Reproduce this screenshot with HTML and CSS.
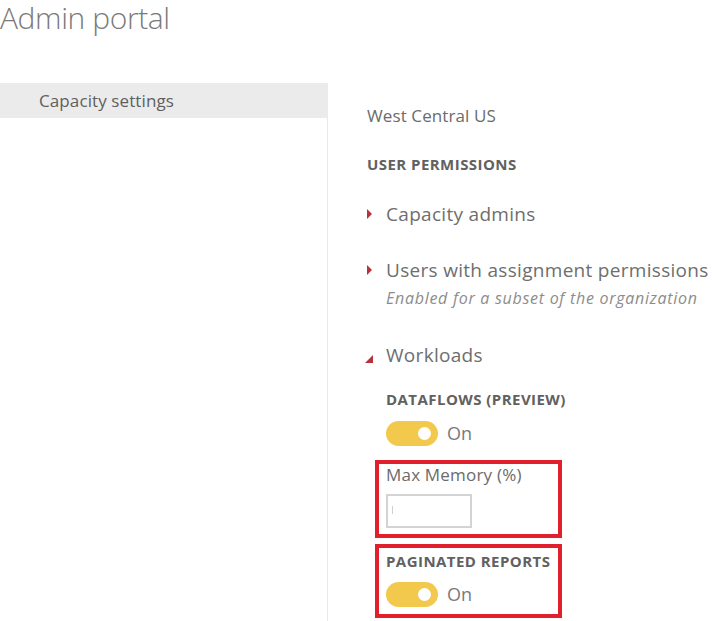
FILE: index.html
```html
<!DOCTYPE html>
<html>
<head>
<meta charset="utf-8">
<link rel="stylesheet" href="styles.css">
</head>
<body>
<h1 class="title">Admin portal</h1>
<div class="layout">
  <nav class="sidebar">
    <div class="nav-item">Capacity settings</div>
  </nav>
  <main class="content">
    <div class="region">West Central US</div>
    <div class="section-head">USER PERMISSIONS</div>
    <div class="group first">
      <div class="group-row"><span class="tri tri-right"></span><span class="group-title">Capacity admins</span></div>
    </div>
    <div class="group second">
      <div class="group-row"><span class="tri tri-right"></span><span class="group-title">Users with assignment permissions</span></div>
      <div class="group-note">Enabled for a subset of the organization</div>
    </div>
    <div class="group workloads">
      <div class="group-row"><span class="tri tri-down"></span><span class="group-title">Workloads</span></div>
      <div class="sub">
        <div class="sub-head">DATAFLOWS (PREVIEW)</div>
        <div class="toggle-row"><span class="toggle"><span class="knob"></span></span><span class="toggle-label">On</span></div>
        <div class="highlight memory">
          <div class="field-label">Max Memory (%)</div>
          <div class="input"><span class="caret"></span></div>
        </div>
        <div class="highlight paginated">
          <div class="sub-head">PAGINATED REPORTS</div>
          <div class="toggle-row"><span class="toggle"><span class="knob"></span></span><span class="toggle-label">On</span></div>
        </div>
      </div>
    </div>
  </main>
</div>
</body>
</html>
```
FILE: styles.css
```css
html, body {
  margin: 0;
  padding: 0;
  background: #ffffff;
}
body {
  font-family: "Open Sans", "Liberation Sans", sans-serif;
  color: #6b6b6b;
  width: 716px;
  height: 621px;
  overflow: hidden;
}
.title {
  margin: 0;
  padding: 0;
  font-size: 30px;
  font-weight: 300;
  color: #7a7a7a;
  line-height: 36px;
  letter-spacing: -0.4px;
}
.layout {
  display: flex;
  margin-top: 47px;
  height: 540px;
}
.sidebar {
  width: 327px;
  border-right: 1px solid #e8e8e8;
  flex: none;
}
.nav-item {
  background: #ebebeb;
  height: 35px;
  line-height: 35px;
  padding-left: 39px;
  font-size: 17px;
  letter-spacing: 0.1px;
  color: #5f5f5f;
  margin-right: -1px;
}
.content {
  padding-left: 39px;
  padding-top: 23px;
}
.region {
  font-size: 17px;
  line-height: 20px;
  color: #6b6b6b;
  letter-spacing: 0.1px;
}
.section-head, .sub-head {
  font-weight: 700;
  font-size: 15px;
  line-height: 18px;
  color: #616161;
  letter-spacing: 0.45px;
}
.section-head {
  margin-top: 29px;
}
.group.first {
  margin-top: 29px;
}
.group.second {
  margin-top: 32px;
}
.group-row {
  display: flex;
  align-items: center;
  height: 24px;
}
.tri {
  width: 19px;
  flex: none;
  position: relative;
  height: 24px;
}
.tri-right::before {
  content: "";
  position: absolute;
  left: 0;
  top: 7px;
  border-left: 5px solid #b8323c;
  border-top: 5px solid transparent;
  border-bottom: 5px solid transparent;
}
.tri-down::before {
  content: "";
  position: absolute;
  left: -2px;
  top: 12px;
  border-bottom: 8px solid #b8323c;
  border-left: 8px solid transparent;
}
.group-title {
  font-size: 19px;
  line-height: 24px;
  color: #6e6e6e;
  letter-spacing: 0.3px;
}
.group-note {
  padding-left: 19px;
  font-style: italic;
  font-size: 16px;
  line-height: 18px;
  letter-spacing: 0.72px;
  color: #8c8c8c;
  margin-top: 7px;
}
.group.workloads {
  margin-top: 36px;
}
.sub {
  padding-left: 19px;
}
.sub > .sub-head {
  margin-top: 23px;
}
.toggle-row {
  display: flex;
  align-items: center;
  height: 25px;
  margin-top: 13px;
}
.toggle {
  width: 52px;
  height: 25px;
  border-radius: 13px;
  background: #f2c94c;
  display: flex;
  align-items: center;
  justify-content: flex-end;
  padding-right: 7px;
  box-sizing: border-box;
  flex: none;
}
.knob {
  width: 13px;
  height: 13px;
  border-radius: 50%;
  background: #fff;
}
.toggle-label {
  margin-left: 9px;
  font-size: 18px;
  line-height: 25px;
  color: #7a7a7a;
}
.highlight {
  border: 4px solid #e0202c;
  margin-left: -11px;
  width: 172px;
  padding-left: 7px;
}
.memory {
  margin-top: 14px;
  height: 69px;
  padding-top: 1px;
}
.field-label {
  font-size: 17px;
  line-height: 20px;
  color: #6b6b6b;
  letter-spacing: 0.2px;
}
.input {
  width: 86px;
  height: 34px;
  border: 2px solid #d4d4d4;
  box-sizing: border-box;
  margin-top: 9px;
  position: relative;
}
.caret {
  position: absolute;
  left: 4px;
  top: 10px;
  width: 1px;
  height: 8px;
  background: #cfcfcf;
}
.paginated {
  margin-top: 6px;
  height: 62px;
  padding-top: 4px;
}
.paginated .toggle-row {
  margin-top: 12px;
}
```
